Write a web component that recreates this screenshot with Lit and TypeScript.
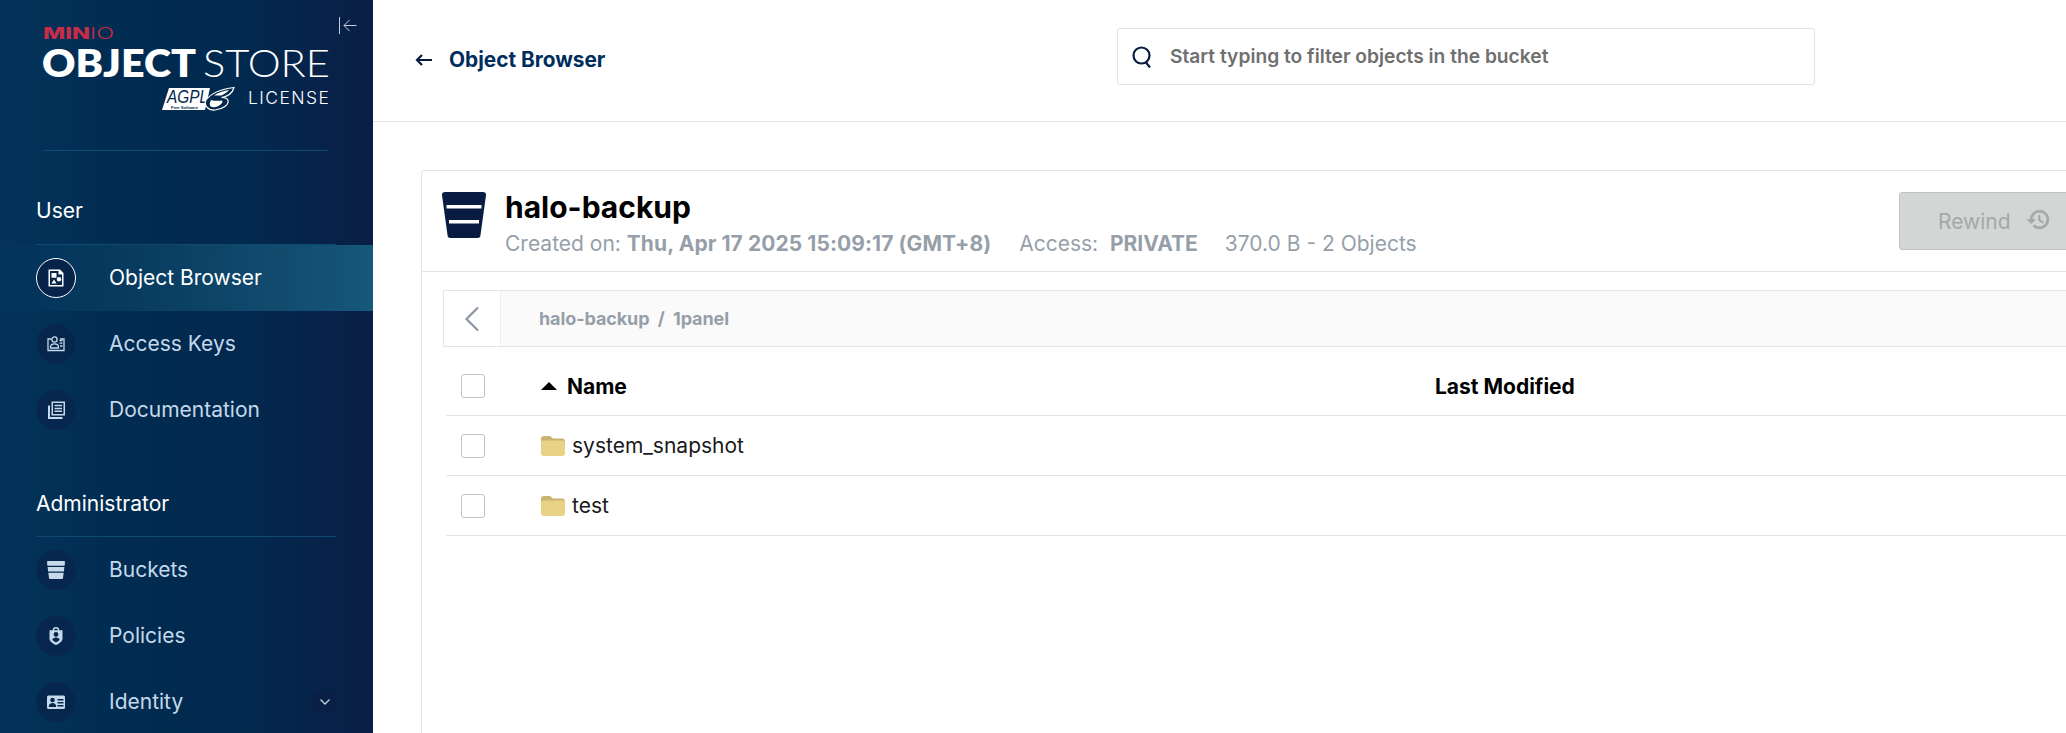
import { LitElement, html, css, svg } from "lit";
import { customElement } from "lit/decorators.js";

const icons: Record<string, unknown> = {
  object: svg`<path fill-rule="evenodd" d="M1.500 .5H13l3.500 3.500v13.500h-15zM3 2v14h12V5.500h-3.500V2zM4.500 4h5v4.800h-5zM12 8a2.300 2.300 0 1 1 0 4.600A2.300 2.300 0 0 1 12 8zM7 10.500l2.600 4H4.400z"/>`,
  keys: svg`<g fill="none" stroke="currentColor" stroke-width="1.300"><path d="M4.500 4H1v11.500h16V4h-4"/><circle cx="7.500" cy="4.500" r="2.600"/><path d="M3.500 13v-1c0-2 1.800-3.200 4-3.200s4 1.200 4 3.200v1z"/><path d="M12.500 5.500h3M12.500 8.200h3M13 11h2.500"/></g>`,
  docs: svg`<path fill-rule="evenodd" d="M4.500 .5H18v14H4.500zM6 2v11h10.500V2zM7.500 3.800H15v1.500H7.500zM7.500 6.700H15v1.500H7.500zM7.500 9.600H15v1.500H7.500zM1 4.500h2V16h12.500v2H1z"/>`,
  buckets: svg`<path fill-rule="evenodd" d="M1 0h16a1 1 0 0 1 1 1.100L17.600 4.800H.4L0 1.100A1 1 0 0 1 1 0zM.6 6h16.800l-.5 4.500H1.100zM1.300 11.700h15.400L16 17a1.200 1.200 0 0 1-1.200 1H3.200A1.200 1.200 0 0 1 2 17z"/>`,
  policies: svg`<path fill-rule="evenodd" d="M9 0a3.500 3.500 0 0 1 3.400 3.300h3.100v8.500c0 2.500-3 4.800-6.500 6.200-3.500-1.400-6.500-3.700-6.500-6.200V3.300h3.100A3.500 3.500 0 0 1 9 0zM9 1.400a2.100 2.100 0 0 0-2 1.900h4a2.100 2.100 0 0 0-2-1.900zM9 5a2.400 2.400 0 1 0 0 4.800A2.400 2.400 0 0 0 9 5zM9 10.400c-2 0-3.700 1-3.700 2.600 1 .9 2.400 1.800 3.700 2.400 1.300-.6 2.700-1.500 3.700-2.400 0-1.600-1.700-2.600-3.700-2.600z"/>`,
  identity: svg`<path fill-rule="evenodd" d="M1.500 2.500h15A1.500 1.500 0 0 1 18 4v10.500a1.500 1.500 0 0 1-1.500 1.500h-15A1.500 1.500 0 0 1 0 14.500V4a1.500 1.500 0 0 1 1.500-1.500zM5.500 4.700a2.300 2.300 0 1 0 0 4.600 2.300 2.300 0 0 0 0-4.600zM5.500 10c-2 0-3.700 1-3.700 4h7.400c0-3-1.700-4-3.700-4zM10.500 6v1.400H16.500V6zM10.500 9v1.400H16.500V9zM10.500 12v1.400H16.500V12z"/>`,
};

const nav = (key: string, label: string, active = false, chevron = false) => html`
  <div class="item ${active ? "active" : ""}">
    <span class="disc"><svg class="ico" viewBox="0 0 18 18" fill="currentColor">${icons[key]}</svg></span>
    <span class="lbl">${label}</span>
    ${chevron
      ? html`<span class="chev"><svg width="12" height="8" viewBox="0 0 12 8" fill="none" stroke="#c5d3e3" stroke-width="1.300"><path d="M1.500 1.500 6 6l4.500-4.500"/></svg></span>`
      : ""}
  </div>
`;

const folder = html`<svg class="folder" viewBox="0 0 24 20"><path fill="#c9b272" d="M0 3a3 3 0 0 1 3-3h6l3 2.500h9a3 3 0 0 1 3 3V8H0z"/><path fill="#e8d285" d="M2 4.500h20a2 2 0 0 1 2 2V17a3 3 0 0 1-3 3H3a3 3 0 0 1-3-3V6.500a2 2 0 0 1 2-2z"/></svg>`;

@customElement("app-root")
export class AppRoot extends LitElement {
  static styles = css`
    :host {
      display: block;
      width: 2066px;
      height: 733px;
      overflow: hidden;
      background: #fff;
      font-family: Inter, "Liberation Sans", sans-serif;
    }
    .app { display: flex; height: 733px; }
    .side {
      width: 373px;
      flex: none;
      height: 733px;
      overflow: hidden;
      position: relative;
      background: linear-gradient(90deg, #03335b 0%, #012b50 35%, #02294f 65%, #0a1e45 100%);
      color: #fff;
    }
    .collapse { position: absolute; left: 339px; top: 17px; }
    .logo { display: block; margin: 0; }
    .rule { height: 1px; background: #0f4a73; }
    .rule.top { margin: 0 45px 0 43px; }
    .grp {
      margin: 0 0 0 36px;
      font-size: 21px;
      line-height: 24px;
      color: #fff;
    }
    .grp.u { padding-top: 48px; padding-bottom: 21px; }
    .grp.a { padding-top: 49px; padding-bottom: 20px; }
    .rule.sec { margin: 0 37px 0 36px; }
    .item {
      height: 66px;
      display: flex;
      align-items: center;
      padding-left: 36px;
      color: #c5d9ea;
    }
    .item.active {
      color: #fff;
      background: linear-gradient(90deg, rgba(21, 88, 122, 0) 0%, #15587a 100%);
    }
    .disc {
      width: 40px;
      height: 40px;
      border-radius: 50%;
      background: #06264d;
      border: 1px solid #0a2850;
      box-sizing: border-box;
      display: flex;
      align-items: center;
      justify-content: center;
      flex: none;
    }
    .active .disc { border: 1px solid #fff; background: #07234a; }
    .ico { width: 18px; height: 18px; }
    .lbl { margin-left: 33px; font-size: 21px; line-height: 24px; flex: 1; }
    .chev {
      width: 23px;
      height: 23px;
      margin-right: 37px;
      background: #0a1f45;
      border-radius: 3px;
      display: flex;
      align-items: center;
      justify-content: center;
    }

    .main { flex: 1; min-width: 0; overflow: hidden; }
    .head {
      height: 122px;
      box-sizing: border-box;
      border-bottom: 1px solid #e5e5e5;
      display: flex;
      align-items: flex-start;
    }
    .crumb {
      display: flex;
      align-items: center;
      margin: 48px 0 0 42px;
      font-size: 20.8px;
      font-weight: 700;
      line-height: 24px;
      color: #002e5c;
      width: 702px;
      flex: none;
    }
    .crumb svg { margin-right: 17px; }
    .search {
      width: 698px;
      height: 57px;
      box-sizing: border-box;
      margin-top: 28px;
      border: 1px solid #e2e2e2;
      border-radius: 3px;
      display: flex;
      align-items: center;
      padding-left: 14px;
      font-size: 19.2px;
      font-weight: 600;
      color: #6f6f6f;
      flex: none;
    }
    .search svg { margin-right: 17px; }
    .search span { position: relative; top: -1px; }

    .card {
      margin: 48px 0 0 48px;
      width: 1694px;
      border: 1px solid #e5e5e5;
      border-radius: 3px 0 0 0;
      height: 620px;
      box-sizing: border-box;
    }
    .bar {
      height: 101px;
      box-sizing: border-box;
      border-bottom: 1px solid #e5e5e5;
      display: flex;
      align-items: flex-start;
    }
    .bkt { margin: 21px 0 0 20px; flex: none; }
    .ttl { margin-left: 19px; }
    h1 {
      margin: 18px 0 0;
      font-size: 30px;
      line-height: 36px;
      font-weight: 700;
      color: #000;
    }
    .meta {
      margin-top: 7px;
      font-size: 21px;
      line-height: 24px;
      color: #969fa9;
      display: flex;
      white-space: nowrap;
    }
    .meta b { font-weight: 700; }
    .meta .date { letter-spacing: 0.08px; }
    .gap { margin-left: 28px; }
    .gap.tight { margin-left: 27px; }
    .rew {
      margin: 21px 0 0 auto;
      width: 215px;
      height: 58px;
      box-sizing: border-box;
      flex: none;
      background: #d4d6d6;
      border: 1px solid #c2c4c4;
      border-radius: 3px;
      padding-left: 38px;
      display: flex;
      align-items: center;
      font-size: 21px;
      color: #a5a8a8;
    }
    .rew svg { margin: 0 0 4px 15px; }
    .body { padding: 18px 0 0 21px; }
    .path {
      height: 57px;
      box-sizing: border-box;
      border: 1px solid #e5e5e5;
      display: flex;
      background: #fafafa;
      border-right: none;
    }
    .back {
      width: 57px;
      flex: none;
      background: #fff;
      border-right: 1px solid #ededed;
      box-sizing: border-box;
      display: flex;
      align-items: center;
      justify-content: center;
    }
    .bc {
      margin-left: 38px;
      align-self: center;
      font-size: 18px;
      letter-spacing: -0.1px;
      font-weight: 700;
      color: #969fa9;
      white-space: pre;
    }
    .row {
      display: grid;
      grid-template-columns: 95px 894px 1fr;
      align-items: center;
      border-bottom: 1px solid #e5e5e5;
      height: 60px;
      box-sizing: border-box;
      margin-left: 3px;
      font-size: 21px;
      color: #1a1a1a;
    }
    .row.th {
      height: 69px;
      padding-top: 10px;
      font-weight: 700;
      color: #000;
    }
    .cb {
      width: 24px;
      height: 24px;
      box-sizing: border-box;
      margin-left: 15px;
      border: 1px solid #c4c4c4;
      border-radius: 3px;
      background: #fff;
    }
    .nm { display: flex; align-items: center; }
    .sort { margin-right: 10px; }
    .folder { width: 24px; height: 20px; margin-right: 7px; flex: none; }
  `;

  render() {
    return html`
      <div class="app">
        <aside class="side">
          <svg class="logo" width="373" height="150" viewBox="0 0 373 150">
            <text x="43" y="38.500" font-family="Inter, sans-serif" font-size="15.500" font-weight="800" fill="#c72c48" textLength="47" lengthAdjust="spacingAndGlyphs">MIN</text>
            <text x="90" y="38.500" font-family="Inter, sans-serif" font-size="15.500" font-weight="300" fill="#c72c48" textLength="24" lengthAdjust="spacingAndGlyphs">IO</text>
            <text x="42" y="77" font-family="Lato, Inter, sans-serif" font-size="37" font-weight="800" fill="#fff" textLength="154" lengthAdjust="spacingAndGlyphs">OBJECT</text>
            <text x="203" y="77" font-family="Lato, Inter, sans-serif" font-size="37" font-weight="300" fill="#fff" textLength="127" lengthAdjust="spacingAndGlyphs">STORE</text>
            <text x="248" y="104" font-family="Inter, sans-serif" font-size="17.500" font-weight="300" fill="#fff" textLength="81" lengthAdjust="spacing">LICENSE</text>
            <path fill="#fff" d="M169 88h41l-5 22h-43z"/>
            <text x="167" y="103" font-family="Liberation Sans, sans-serif" font-size="18" font-style="italic" fill="#03284f" textLength="41" lengthAdjust="spacingAndGlyphs">AGPL</text>
            <text x="171" y="109" font-family="Liberation Sans, sans-serif" font-size="4" font-weight="700" fill="#03284f" textLength="27" lengthAdjust="spacingAndGlyphs">Free Software</text>
            <path fill="#03284f" stroke="#fff" stroke-width="1.200" d="M234 87.500C222 89 212 92 206 100c-2.500 5 2 10.500 9 10 8-.5 14-5.500 13-9.500-.5-2-3-3-6.500-3 5.500-1 11-4.500 12.500-10z"/>
            <path fill="#fff" d="M229 90c-5 1-11 2.500-15 5.500h7c3-1 6-3 8-5.500zM211 100c3 1 7 1 11 .5 1.500 2-1 4-4.500 6-3.500 1-6.500 1-7.500-1-.5-1.500 0-3.500 1-5.500z"/>
          </svg>
          <svg class="collapse" width="18" height="18" viewBox="0 0 18 18" fill="none" stroke="#c9ced8" stroke-width="1"><path d="M.5 0v17M17.500 8.500H5M10.500 3 5 8.500l5.500 5.500"/></svg>
          <div class="rule top"></div>
          <div class="grp u">User</div>
          <div class="rule sec"></div>
          <div class="list">
            ${nav("object", "Object Browser", true)}
            ${nav("keys", "Access Keys")}
            ${nav("docs", "Documentation")}
          </div>
          <div class="grp a">Administrator</div>
          <div class="rule sec"></div>
          <div class="list">
            ${nav("buckets", "Buckets")}
            ${nav("policies", "Policies")}
            ${nav("identity", "Identity", false, true)}
          </div>
        </aside>
        <main class="main">
          <header class="head">
            <div class="crumb">
              <svg width="17" height="12" viewBox="0 0 17 12" fill="none" stroke="#081c42" stroke-width="2.200"><path d="M17 6H2M7 1 2 6l5 5"/></svg>
              <span>Object Browser</span>
            </div>
            <div class="search">
              <svg width="21" height="22" viewBox="0 0 21 22" fill="none" stroke="#081c42" stroke-width="2.200"><circle cx="9.500" cy="9.500" r="8"/><path d="m14 16.500 4 5"/></svg>
              <span>Start typing to filter objects in the bucket</span>
            </div>
          </header>
          <section class="card">
            <div class="bar">
              <svg class="bkt" width="44" height="46" viewBox="0 0 44 46">
                <path fill="#081c42" d="M3 0h38a3 3 0 0 1 3 3.300L38.500 43a3 3 0 0 1-3 3h-27a3 3 0 0 1-3-3L0 3.300A3 3 0 0 1 3 0z"/>
                <path fill="#fff" d="M4.500 13h35v3.500h-35zM7 28h30v3.500H7z"/>
              </svg>
              <div class="ttl">
                <h1>halo-backup</h1>
                <div class="meta">
                  <span>Created on:&nbsp;<b class="date">Thu, Apr 17 2025 15:09:17 (GMT+8)</b></span>
                  <span class="gap">Access:&nbsp;&nbsp;<b>PRIVATE</b></span>
                  <span class="gap tight">370.0 B - 2 Objects</span>
                </div>
              </div>
              <div class="rew">
                <span>Rewind</span>
                <svg width="25" height="25" viewBox="0 0 24 24" fill="#a5a8a8" stroke="#a5a8a8" stroke-width=".6"><path d="M13 3a9 9 0 0 0-9 9H1l3.900 3.900.1.100L9 12H6a7 7 0 1 1 2.100 5l-1.400 1.400A9 9 0 1 0 13 3zm-1 5v5l4.300 2.500.7-1.200-3.500-2.100V8z"/></svg>
              </div>
            </div>
            <div class="body">
              <div class="path">
                <div class="back">
                  <svg width="16" height="26" viewBox="0 0 16 26" fill="none" stroke="#8a96a3" stroke-width="2.200"><path d="M14 1.500 2.500 13 14 24.500"/></svg>
                </div>
                <div class="bc">halo-backup  /  1panel</div>
              </div>
              <div class="row th">
                <div class="cb"></div>
                <div class="nm">
                  <svg class="sort" width="16" height="8" viewBox="0 0 16 8" fill="#000"><path d="M8 0l8 8H0z"/></svg>
                  <span>Name</span>
                </div>
                <div>Last Modified</div>
              </div>
              <div class="row"><div class="cb"></div><div class="nm">${folder}<span>system_snapshot</span></div><div></div></div>
              <div class="row"><div class="cb"></div><div class="nm">${folder}<span>test</span></div><div></div></div>
            </div>
          </section>
        </main>
      </div>
    `;
  }
}
